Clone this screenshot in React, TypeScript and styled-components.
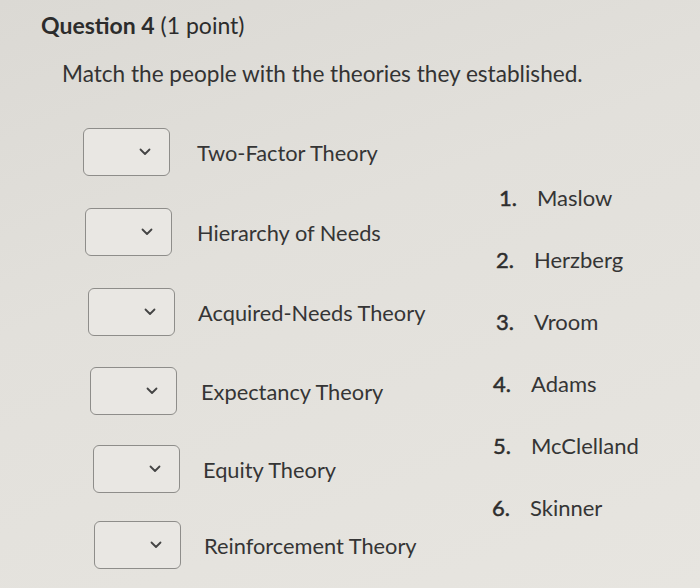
import React from "react";
import styled, { createGlobalStyle } from "styled-components";

const Global = createGlobalStyle`
  html, body { margin: 0; padding: 0; }
  body {
    width: 700px;
    height: 588px;
    overflow: hidden;
    background: linear-gradient(160deg, #dbd9d4 0%, #e2e0db 40%, #e7e5e0 100%);
    font-family: Lato, "Open Sans", sans-serif;
    color: #3a3a3a;
  }
`;

const Page = styled.div`
  width: 700px;
  height: 588px;
  box-sizing: border-box;
  padding: 9px 0 0 0;
  display: flex;
  flex-direction: column;
`;

const Title = styled.h2`
  margin: 0 0 0 41px;
  font-size: 23px;
  line-height: 32px;
  font-weight: 400;
  color: #2c2c2c;
  b { font-weight: 700; }
`;

const Prompt = styled.p`
  margin: 19px 0 0 62px;
  font-size: 22.6px;
  line-height: 28px;
  color: #333;
`;

const Body = styled.div`
  display: flex;
  margin-top: 40px;
`;

const LeftCol = styled.div`
  display: flex;
  flex-direction: column;
  padding-left: 83px;
  width: 410px;
`;

const MatchRow = styled.div<{ $shift: number; $top: number }>`
  display: flex;
  align-items: center;
  height: 48px;
  margin-left: ${(p) => p.$shift}px;
  margin-top: ${(p) => p.$top}px;
`;

const SelectBox = styled.div`
  box-sizing: border-box;
  width: 87px;
  height: 48px;
  border: 1.5px solid #8e8d8a;
  border-radius: 6px;
  background: #e9e7e3;
  display: flex;
  align-items: center;
  justify-content: flex-end;
  padding-right: 18px;
  flex-shrink: 0;
`;

const Label = styled.span<{ $gap: number }>`
  margin-left: ${(p) => p.$gap}px;
  font-size: 21.8px;
  color: #353535;
  white-space: nowrap;
`;

const RightCol = styled.ol`
  list-style: none;
  margin: 38px 0 0 0;
  padding: 0;
  display: flex;
  flex-direction: column;
`;

const Option = styled.li<{ $shift: number }>`
  display: flex;
  align-items: center;
  height: 62px;
  font-size: 22px;
  color: #353535;
  margin-left: ${(p) => p.$shift}px;
`;

const Num = styled.span`
  width: 38px;
  flex-shrink: 0;
  color: #2e2e2e;
  -webkit-text-stroke: 0.5px #2e2e2e;
`;

const Chevron = () => (
  <svg width="12" height="8" viewBox="0 0 12 8" fill="none">
    <path d="M1.5 1.5 L6 6 L10.5 1.5" stroke="#444" strokeWidth="1.8" strokeLinecap="round" strokeLinejoin="round" />
  </svg>
);

const theories = [
  { label: "Two-Factor Theory", shift: 0, top: 0, gap: 27 },
  { label: "Hierarchy of Needs", shift: 2, top: 32, gap: 25 },
  { label: "Acquired-Needs Theory", shift: 5, top: 32, gap: 23 },
  { label: "Expectancy Theory", shift: 7, top: 31, gap: 24 },
  { label: "Equity Theory", shift: 10, top: 30, gap: 23 },
  { label: "Reinforcement Theory", shift: 11, top: 28, gap: 23 },
];

const people = [
  { name: "Maslow", shift: 6 },
  { name: "Herzberg", shift: 3 },
  { name: "Vroom", shift: 3 },
  { name: "Adams", shift: 0 },
  { name: "McClelland", shift: 0 },
  { name: "Skinner", shift: -1 },
];

export default function App() {
  return (
    <>
      <Global />
      <Page>
        <Title>
          <b>Question 4</b> (1 point)
        </Title>
        <Prompt>Match the people with the theories they established.</Prompt>
        <Body>
          <LeftCol>
            {theories.map((t) => (
              <MatchRow key={t.label} $shift={t.shift} $top={t.top}>
                <SelectBox>
                  <Chevron />
                </SelectBox>
                <Label $gap={t.gap}>{t.label}</Label>
              </MatchRow>
            ))}
          </LeftCol>
          <RightCol>
            {people.map((p, i) => (
              <Option key={p.name} $shift={p.shift}>
                <Num>{i + 1}.</Num>
                {p.name}
              </Option>
            ))}
          </RightCol>
        </Body>
      </Page>
    </>
  );
}
